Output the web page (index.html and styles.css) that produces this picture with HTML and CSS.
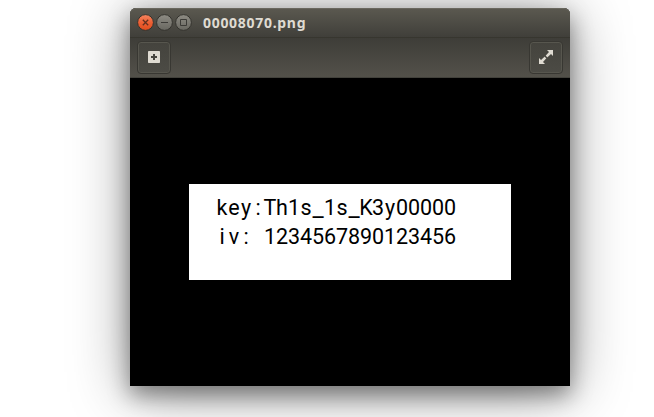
FILE: index.html
```html
<!DOCTYPE html>
<html lang="en">
<head>
<meta charset="utf-8">
<title>00008070.png</title>
<link rel="stylesheet" href="styles.css">
</head>
<body>
<main class="window">
  <header class="titlebar">
    <svg class="controls" width="55" height="18" viewBox="0 0 55 18">
      <defs>
        <linearGradient id="orange" x2="0" y2="1"><stop stop-color="#f58560"/><stop offset=".5" stop-color="#ed6034"/><stop offset="1" stop-color="#e04c1c"/></linearGradient>
        <linearGradient id="gray" x2="0" y2="1"><stop stop-color="#8e8c84"/><stop offset="1" stop-color="#686760"/></linearGradient>
      </defs>
      <g stroke="#34332e">
        <circle cx="8.5" cy="8.5" r="7.9" fill="url(#orange)"/>
        <circle cx="27.5" cy="8.5" r="7.9" fill="url(#gray)"/>
        <circle cx="46.5" cy="8.5" r="7.9" fill="url(#gray)"/>
      </g>
      <path d="M5.8 5.8l5.4 5.4M11.2 5.8l-5.4 5.4" stroke="#65301f" stroke-width="1.3"/>
      <path d="M24 8.5h7M43.5 5.5h6v6h-6z" stroke="#3c3b37" fill="none"/>
    </svg>
    <h1 class="title">00008070.png</h1>
  </header>
  <div class="toolbar">
    <button class="tool" aria-label="Add">
      <svg width="12" height="12" viewBox="0 0 12 12"><rect width="12" height="12" rx=".7" fill="#dfdbd2"/><path d="M3 6h6M6 3v6" stroke="#46453f" stroke-width="2"/></svg>
    </button>
    <button class="tool" aria-label="Fullscreen">
      <svg width="14" height="14" viewBox="0 0 14 14"><path d="M8 0h6v6l-2-2-3.8 3.4-1.6-1.6L10 2zM0 8l2 2 3.8-3.4 1.6 1.6L4 12l2 2H0z" fill="#dfdbd2"/><path d="M5.2 5.2l3.6 3.6" stroke="#494842" stroke-width="1.2"/></svg>
    </button>
  </div>
  <section class="viewer">
    <div class="picture">
      <p class="line"><span>k</span><span>e</span><span>y</span><span>:</span><span>T</span><span>h</span><span>1</span><span>s</span><span class="low">_</span><span>1</span><span>s</span><span class="low">_</span><span>K</span><span>3</span><span>y</span><span>0</span><span>0</span><span>0</span><span>0</span><span>0</span></p>
      <p class="line"><span>i</span><span>v</span><span>:</span><span> </span><span>1</span><span>2</span><span>3</span><span>4</span><span>5</span><span>6</span><span>7</span><span>8</span><span>9</span><span>0</span><span>1</span><span>2</span><span>3</span><span>4</span><span>5</span><span>6</span></p>
    </div>
  </section>
</main>
</body>
</html>
```
FILE: styles.css
```css
* { box-sizing: border-box; }
html { overflow: hidden; }
body { margin: 0; background: #fff; height: 417px; overflow: hidden; }
.window {
  width: 440px;
  height: 378px;
  margin: 8px 0 0 130px;
  border-radius: 6px 6px 0 0;
  background: #000;
  box-shadow: 0 9px 22px rgba(0,0,0,.4), 0 6px 60px rgba(0,0,0,.4);
}
.titlebar {
  display: flex;
  align-items: center;
  height: 29px;
  padding-left: 7px;
  border-radius: 6px 6px 0 0;
  background: linear-gradient(#5b5950, #403f3a);
  box-shadow: inset 0 1px #69675e;
}
.controls { display: block; margin-top: 1px; }
.title {
  margin: 1px 0 0 11px;
  font: 700 14px/20px "Noto Sans", "Open Sans", sans-serif;
  letter-spacing: .7px;
  color: #dfdbd2;
}
.toolbar {
  display: flex;
  justify-content: space-between;
  height: 41px;
  padding: 3px 7px 0;
  border-top: 1px solid #37362f;
  border-bottom: 1px solid #42413b;
  background: linear-gradient(#3e3d38, #53514a);
}
.tool {
  display: flex;
  align-items: center;
  justify-content: center;
  width: 34px;
  height: 33px;
  padding: 0 0 1px;
  border: 1px solid #383732;
  border-radius: 4px;
  background: linear-gradient(#44433d, #4c4b45);
  box-shadow: inset 0 0 0 1px #57564e;
}
.viewer {
  height: 308px;
  padding: 106px 59px 0;
}
.picture {
  width: 322px;
  height: 96px;
  padding: 9px 0 0 27px;
  background: #fff;
}
.line {
  display: flex;
  margin: 0;
  font: 400 21.5px/29px Roboto, "Liberation Sans", sans-serif;
  color: #000;
}
.line span {
  display: flex;
  justify-content: center;
  width: 12px;
  white-space: pre;
}
.line .low {
  transform: translateY(1px) scaleX(1.15);
}
```
